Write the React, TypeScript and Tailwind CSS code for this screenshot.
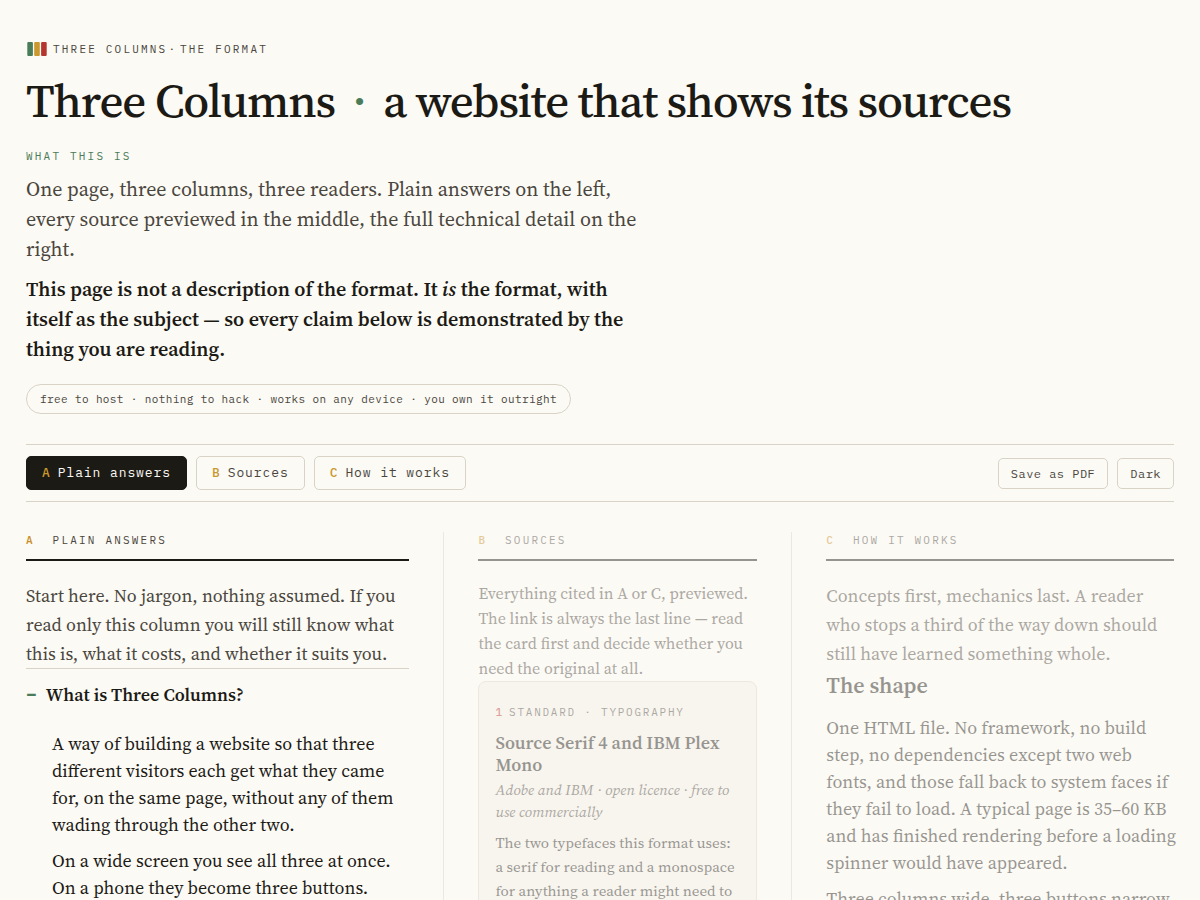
import { useState, type ReactNode } from "react";
import clsx from "clsx";

const TABS = [
  { id: "A", label: "Plain answers" },
  { id: "B", label: "Sources" },
  { id: "C", label: "How it works" },
];

const mono = "font-['IBM_Plex_Mono','Liberation_Mono',monospace]";

function Logo() {
  return (
    <svg width="22" height="16" viewBox="0 0 22 16" aria-hidden="true">
      <rect x="1.3" y="1" width="5.6" height="14" rx="1" fill="#4a7c59" />
      <rect x="8.2" y="1" width="5.6" height="14" rx="1" fill="#c9982f" />
      <rect x="15.1" y="1" width="5.6" height="14" rx="1" fill="#b5362f" />
    </svg>
  );
}

function Column({ id, title, active, className, children }: {
  id: string;
  title: string;
  active: boolean;
  className?: string;
  children: ReactNode;
}) {
  return (
    <section className={clsx("border-[#d9d3c7]", !active && "opacity-45", className)}>
      <h2 className={clsx(mono, "flex gap-5 border-b-2 border-[#1c1a15] pb-[11px] text-[11px] leading-4 tracking-[0.2em] uppercase text-[#4a463d]")}>
        <span className="font-medium tracking-normal text-[#c98f2a]">{id}</span>
        {title}
      </h2>
      {children}
    </section>
  );
}

export default function App() {
  const [active, setActive] = useState("A");

  return (
    <div className="min-h-screen bg-[#fcfaf5] px-[26px] pt-10 pb-16 font-['Source_Serif_4','Liberation_Serif',serif] text-[#1c1a15]">
      <header>
        <div className={clsx(mono, "flex items-center gap-[5px] text-[11px] leading-[18px] tracking-[0.2em] uppercase text-[#4a463d]")}>
          <Logo />
          <span>Three Columns</span>
          <span className="-ml-1 tracking-normal">·</span>
          <span>The format</span>
        </div>
        <h1 className="mt-4 text-[47px] leading-[54px] font-medium tracking-tight">
          Three Columns <span className="mx-2 text-[#4a7c59]">·</span> a website that shows its sources
        </h1>
        <p className={clsx(mono, "mt-5 text-[11px] leading-4 tracking-[0.2em] uppercase text-[#4a7c59]")}>What this is</p>
        <div className="mt-[10px] max-w-[624px] space-y-[10px] text-[20px] leading-[30px]">
          <p className="text-[#4a463d]">
            One page, three columns, three readers. Plain answers on the left, every source previewed in
            the middle, the full technical detail on the right.
          </p>
          <p className="font-semibold">
            This page is not a description of the format. It <em>is</em> the format, with itself as the
            subject — so every claim below is demonstrated by the thing you are reading.
          </p>
        </div>
        <p className={clsx(mono, "mt-5 inline-block rounded-full border border-[#d9d3c7] px-[13px] py-[5px] text-[11px] leading-[18px] tracking-[0.035em] text-[#4a463d]")}>
          free to host · nothing to hack · works on any device · you own it outright
        </p>
      </header>

      <nav className={clsx(mono, "mt-[30px] flex flex-wrap items-center gap-[9px] border-y border-[#d9d3c7] py-[11px] text-[#4a463d]")}>
        {TABS.map((tab) => (
          <button
            key={tab.id}
            type="button"
            onClick={() => setActive(tab.id)}
            className={clsx(
              "flex gap-[7px] rounded-[5px] border px-[15px] py-[6px] text-[13px] leading-5 tracking-[0.07em]",
              active === tab.id ? "border-[#1c1a15] bg-[#1c1a15] text-[#fcfaf5]" : "border-[#d9d3c7]",
            )}
          >
            <span className="font-medium text-[#c9982f]">{tab.id}</span>
            {tab.label}
          </button>
        ))}
        <div className="ml-auto flex gap-[9px] text-[12px] leading-[19px] tracking-[0.04em]">
          <button type="button" onClick={() => window.print()} className="rounded-[5px] border border-[#d9d3c7] px-3 py-[5px]">
            Save as PDF
          </button>
          <button type="button" className="rounded-[5px] border border-[#d9d3c7] px-3 py-[5px]">
            Dark
          </button>
        </div>
      </nav>

      <main className="mt-[30px] grid grid-cols-[1.2fr_1fr_1.1fr]">
        <Column id="A" title="Plain answers" active={active === "A"} className="pr-[34px]">
          <p className="mt-5 text-[18px] leading-[29px] text-[#4a463d]">
            Start here. No jargon, nothing assumed. If you read only this column you will still know what
            this is, what it costs, and whether it suits you.
          </p>
          <details open className="border-t border-[#d9d3c7]">
            <summary className="flex cursor-pointer list-none items-center gap-[9px] py-3 text-[18px] leading-[27px] font-semibold">
              <span className={clsx(mono, "font-bold text-[#4a7c59]")}>–</span>
              What is Three Columns?
            </summary>
            <div className="space-y-[9px] pt-[10px] pl-[26px] text-[18px] leading-[27px]">
              <p>
                A way of building a website so that three different visitors each get what they came for,
                on the same page, without any of them wading through the other two.
              </p>
              <p>On a wide screen you see all three at once. On a phone they become three buttons.</p>
            </div>
          </details>
        </Column>

        <Column id="B" title="Sources" active={active === "B"} className="border-l px-[34px]">
          <p className="mt-5 text-[16px] leading-[25px] text-[#4a463d]">
            Everything cited in A or C, previewed. The link is always the last line — read the card first
            and decide whether you need the original at all.
          </p>
          <article className="rounded-lg border border-[#d9d3c7] bg-[#f5f0e8] px-4 pt-[22px] pb-5">
            <p className={clsx(mono, "flex gap-[7px] text-[11px] leading-4 tracking-[0.16em] uppercase text-[#4a463d]")}>
              <span className="font-medium tracking-normal text-[#b5362f]">1</span>
              Standard · Typography
            </p>
            <h3 className="mt-3 text-[18px] leading-[22px] font-semibold">Source Serif 4 and IBM Plex Mono</h3>
            <p className="mt-[3px] text-[15px] leading-[22px] text-[#4a463d] italic">
              Adobe and IBM · open licence · free to use commercially
            </p>
            <p className="mt-2 text-[15px] leading-6">
              The two typefaces this format uses: a serif for reading and a monospace for anything a reader
              might need to copy exactly.
            </p>
          </article>
        </Column>

        <Column id="C" title="How it works" active={active === "C"} className="border-l pl-[34px]">
          <p className="mt-5 text-[18px] leading-[29px] text-[#4a463d]">
            Concepts first, mechanics last. A reader who stops a third of the way down should still have
            learned something whole.
          </p>
          <h3 className="mt-[3px] text-[22px] leading-[29px] font-semibold">The shape</h3>
          <div className="mt-[14px] -mr-2 space-y-[9px] text-[18px] leading-[27px]">
            <p>
              One HTML file. No framework, no build step, no dependencies except two web fonts,&nbsp;and those
              fall back to system faces if they fail to load. A typical page is 35–60 KB and has finished
              rendering before a loading spinner would have appeared.
            </p>
            <p>Three columns wide, three buttons narrow.</p>
          </div>
        </Column>
      </main>
    </div>
  );
}
